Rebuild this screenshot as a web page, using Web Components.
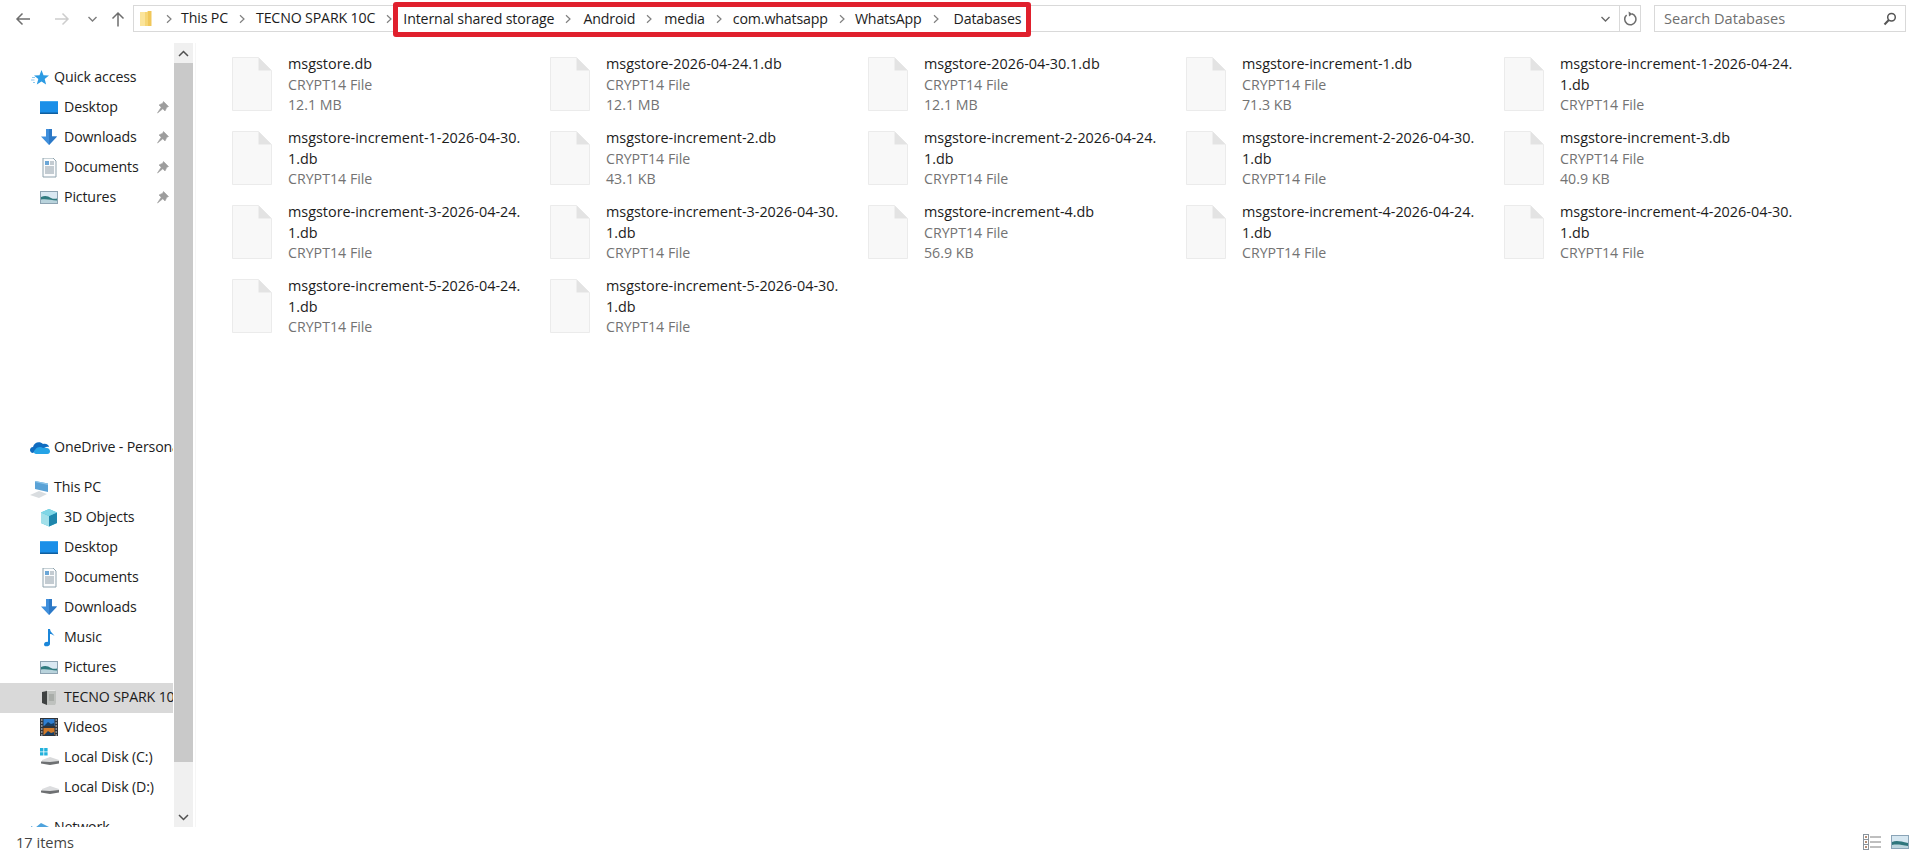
<!DOCTYPE html>
<html lang="en"><head><meta charset="utf-8"><title>Databases</title>
<style>
html,body{margin:0;padding:0;background:#fff;height:100%;overflow:hidden}
body{font:14.6px/20px "Open Sans","Noto Sans","Liberation Sans",sans-serif;color:#1c1c1c}
</style></head><body>
<x-explorer>
  <x-toolbar slot="top">
    <x-crumb>This PC</x-crumb><x-crumb>TECNO SPARK 10C</x-crumb>
    <x-highlight slot="marked">
      <x-crumb style="margin-right:1px">Internal shared storage</x-crumb><x-crumb style="margin-right:1px">Android</x-crumb><x-crumb>media</x-crumb><x-crumb style="margin-right:-1px">com.whatsapp</x-crumb><x-crumb style="margin-right:4px">WhatsApp</x-crumb><x-crumb last>Databases</x-crumb>
    </x-highlight>
  </x-toolbar>
  <x-sidebar slot="side">
    <x-nav level="0" icon="star">Quick access</x-nav>
    <x-nav icon="desktop" pin>Desktop</x-nav>
    <x-nav icon="downloads" pin>Downloads</x-nav>
    <x-nav icon="documents" pin>Documents</x-nav>
    <x-nav icon="pictures" pin>Pictures</x-nav>
    <x-nav level="0" icon="onedrive" style="margin-top:220px">OneDrive - Personal</x-nav>
    <x-nav level="0" icon="pc" style="margin-top:10px">This PC</x-nav>
    <x-nav icon="cube">3D Objects</x-nav>
    <x-nav icon="desktop">Desktop</x-nav>
    <x-nav icon="documents">Documents</x-nav>
    <x-nav icon="downloads">Downloads</x-nav>
    <x-nav icon="music">Music</x-nav>
    <x-nav icon="pictures">Pictures</x-nav>
    <x-nav icon="phone" selected>TECNO SPARK 10C</x-nav>
    <x-nav icon="videos">Videos</x-nav>
    <x-nav icon="diskc">Local Disk (C:)</x-nav>
    <x-nav icon="disk">Local Disk (D:)</x-nav>
    <x-nav level="0" icon="network" style="margin-top:10px">Network</x-nav>
  </x-sidebar>
  <x-files slot="main">
    <x-file type="CRYPT14 File" size="12.1 MB">msgstore.db</x-file>
    <x-file type="CRYPT14 File" size="12.1 MB">msgstore-2026-04-24.1.db</x-file>
    <x-file type="CRYPT14 File" size="12.1 MB">msgstore-2026-04-30.1.db</x-file>
    <x-file type="CRYPT14 File" size="71.3 KB">msgstore-increment-1.db</x-file>
    <x-file type="CRYPT14 File">msgstore-increment-1-2026-04-24.<br>1.db</x-file>
    <x-file type="CRYPT14 File">msgstore-increment-1-2026-04-30.<br>1.db</x-file>
    <x-file type="CRYPT14 File" size="43.1 KB">msgstore-increment-2.db</x-file>
    <x-file type="CRYPT14 File">msgstore-increment-2-2026-04-24.<br>1.db</x-file>
    <x-file type="CRYPT14 File">msgstore-increment-2-2026-04-30.<br>1.db</x-file>
    <x-file type="CRYPT14 File" size="40.9 KB">msgstore-increment-3.db</x-file>
    <x-file type="CRYPT14 File">msgstore-increment-3-2026-04-24.<br>1.db</x-file>
    <x-file type="CRYPT14 File">msgstore-increment-3-2026-04-30.<br>1.db</x-file>
    <x-file type="CRYPT14 File" size="56.9 KB">msgstore-increment-4.db</x-file>
    <x-file type="CRYPT14 File">msgstore-increment-4-2026-04-24.<br>1.db</x-file>
    <x-file type="CRYPT14 File">msgstore-increment-4-2026-04-30.<br>1.db</x-file>
    <x-file type="CRYPT14 File">msgstore-increment-5-2026-04-24.<br>1.db</x-file>
    <x-file type="CRYPT14 File">msgstore-increment-5-2026-04-30.<br>1.db</x-file>
  </x-files>
  <x-status slot="bottom">17 items</x-status>
</x-explorer>
<script>
class Base extends HTMLElement{
  constructor(){super();this.attachShadow({mode:'open'});}
  render(html){this.shadowRoot.innerHTML=html;}
}
customElements.define('x-explorer',class extends Base{connectedCallback(){this.render(`<style>
:host{display:flex;flex-direction:column;width:1919px;height:853px;overflow:hidden;background:#fff}
.mid{flex:1;display:flex;min-height:0}
::slotted([slot=main]){flex:1}
</style><slot name="top"></slot><div class="mid"><slot name="side"></slot><slot name="main"></slot></div><slot name="bottom"></slot>`);}});

const chev=`<svg width="8" height="10" viewBox="0 0 8 10"><path d="M2 1.200 6 5 2 8.800" fill="none" stroke="#808080" stroke-width="1.200"/></svg>`;

customElements.define('x-toolbar',class extends Base{connectedCallback(){this.render(`<style>
:host{display:flex;align-items:flex-start;height:43px;box-sizing:border-box;padding:5px 13px 0 15px;flex:none}
.nav{display:flex;align-items:center;height:27px;width:118px;flex:none}
.nav svg{display:block;flex:none}
.addr{flex:none;width:1508px;height:27px;box-sizing:border-box;border:1px solid #d9d9d9;display:flex;align-items:center}
.folder{margin-left:6px;flex:none;display:block}
.sep{flex:none;display:flex;width:8px;margin:0 8px 0 13px}
.end{margin-left:auto;display:flex;align-items:center;height:100%;flex:none}
.dd{width:28px;display:flex;justify-content:center}
.rf{width:20px;height:100%;border-left:1px solid #d9d9d9;display:flex;align-items:center;justify-content:center}
.search{flex:none;width:252px;margin-left:13px;height:27px;box-sizing:border-box;border:1px solid #d9d9d9;display:flex;align-items:center;padding:0 8px 0 9px;color:#6f6f6f;justify-content:space-between}
.search span{padding-bottom:1px}
.crumbs{display:flex;align-items:center;flex:none}
</style>
<div class="nav">
<svg width="16" height="14" viewBox="0 0 16 14"><path d="M15 7H2M7.500 1.500 2 7l5.500 5.500" fill="none" stroke="#6e6e6e" stroke-width="1.500"/></svg>
<svg style="margin-left:23px" width="16" height="14" viewBox="0 0 16 14"><path d="M1 7h13M8.500 1.500 14 7l-5.500 5.500" fill="none" stroke="#cdcdcd" stroke-width="1.500"/></svg>
<svg style="margin-left:17px" width="11" height="8" viewBox="0 0 11 8"><path d="M1.500 2 5.500 6l4-4" fill="none" stroke="#7d7d7d" stroke-width="1.400"/></svg>
<svg style="margin-left:13px" width="14" height="16" viewBox="0 0 14 16"><path d="M7 15.500V2M1.500 7.500 7 2l5.500 5.500" fill="none" stroke="#6e6e6e" stroke-width="1.500"/></svg>
</div>
<div class="addr">
<svg class="folder" width="12" height="16" viewBox="0 0 12 16"><path d="M0 1h7l1-1h3v15H0z" fill="#f6d676"/><path d="M0 1h5v14H0z" fill="#fbe49a"/><path d="M8 0h3.500v15H8z" fill="#f0c75a"/></svg>
<span class="sep">${chev}</span>
<div class="crumbs"><slot></slot></div>
<slot name="marked"></slot>
<div class="end"><span class="dd"><svg width="11" height="8" viewBox="0 0 11 8"><path d="M1.500 2 5.500 6l4-4" fill="none" stroke="#666" stroke-width="1.300"/></svg></span>
<span class="rf"><svg width="14" height="15" viewBox="0 0 14 15"><path d="M8.800 2.800A5.600 5.600 0 1 1 3.600 4" fill="none" stroke="#6e6e6e" stroke-width="1.500"/><path d="M5.600.6 9.400 2.900 6 5.500z" fill="#6e6e6e"/></svg></span></div>
</div>
<div class="search"><span>Search Databases</span>
<svg width="14" height="14" viewBox="0 0 14 14"><circle cx="8.500" cy="5.200" r="3.800" fill="none" stroke="#555" stroke-width="1.500"/><path d="M5.800 8 1.500 12.500" stroke="#555" stroke-width="2"/></svg></div>`);}});

customElements.define('x-crumb',class extends Base{connectedCallback(){
  const last=this.hasAttribute('last');
  this.render(`<style>
:host{display:inline-flex;align-items:center;flex:none;white-space:nowrap;font-size:14.2px;letter-spacing:-.15px}
svg{display:block;margin:0 10px;flex:none}
span{padding-bottom:1px}
</style><span><slot></slot></span>${last?'':chev}`);}});

customElements.define('x-highlight',class extends Base{connectedCallback(){this.render(`<style>
:host{display:flex;align-items:center;flex:none;box-sizing:border-box;height:35px;margin:1px 0 0 -10px;padding:0 5px;border:5px solid #e0202d;border-radius:3px;background:#fff;position:relative}
</style><slot></slot>`);}});

const ICONS={
star:`<path d="M11.500 2l2 5.200 5.500.3-4.300 3.500 1.400 5.400-4.600-3-4.700 3 1.500-5.400-4.300-3.500 5.500-.3z" fill="#2c9be3"/><path d="M2 9.500h3M1 12h3.500M3 14.500h2" stroke="#8cc8ef" stroke-width="1"/>`,
desktop:`<rect x="0" y="3" width="18" height="13" fill="#1a8fe8"/><rect x="0" y="14.500" width="18" height="1.500" fill="#0f5f9f"/><rect x="0" y="3" width="18" height="1" fill="#42a8ef"/>`,
downloads:`<path d="M6 1h6v7.500h5l-8 8.500-8-8.500h5z" fill="#3f8fdc"/><path d="M9 1h3v7.500h5l-8 8.500z" fill="#2c78c6"/>`,
documents:`<path d="M3 0h10l3 3v16H3z" fill="#fbfcfd" stroke="#8fa3ae" stroke-width="1"/><rect x="5" y="3" width="4" height="4" fill="#6aa6d6"/><path d="M5 9h9M5 11h9M5 13h9M5 15h9M10 4h4M10 6h4" stroke="#8b9aa5" stroke-width="1"/>`,
pictures:`<rect x=".5" y="3.500" width="17" height="12" fill="#d9e8f2" stroke="#8da3b2"/><path d="M1 9c4-2 7-1 10 1 2 1 4 1 6 .5V15H1z" fill="#2f7a7f"/><path d="M1 11.500c5-1 10 .5 16 1V15H1z" fill="#b9d3dc"/>`,
onedrive:`<path d="M3 15c-4 0-4-6 0-6 1-5 7-6 10-3 3-1 6 1 6 3-3-1-5 1-6 3H7z" fill="#0f6cc0"/><path d="M6 16c-2 0-3-3-1-4 1-3 6-4 8-2 3-1 7 0 7 3s-2 3-4 3z" fill="#25a3e6"/>`,
pc:`<path d="M5 3l13 2.500V14l-13-3z" fill="#5aa2d6"/><path d="M5 3l13 2.500v1.500l-13-3z" fill="#8cc4e8"/><path d="M0 17l9-4 8 3-8 4z" fill="#d9dde0"/>`,
cube:`<path d="M9 1l8 3.500v10.500l-8 3.500-8-3.500V4.500z" fill="#45c1d8"/><path d="M9 8v10.500l-8-3.500V4.500z" fill="#a2e0ea"/><path d="M9 8l8-3.500v10.500l-8 3.500z" fill="#1f86ac"/><path d="M9 1l8 3.500-8 3.500-8-3.500z" fill="#7fd6e6"/>`,
music:`<path d="M8 1h2c.5 4 3.500 4.500 4.500 7-2-1.500-3-2-4.500-2v10c0 2.500-6 3.500-6 .5 0-2.500 3-3 4-2.500z" fill="#1b86d9"/>`,
phone:`<path d="M5 3l3-1h7l1 1v12l-1 2H7l-2-1z" fill="#bfc2bf"/><path d="M2 4l5-1v14l-5-2z" fill="#3f4242"/><path d="M7 2h8l1 1H7z" fill="#e6e7e6"/><rect x="9" y="6" width="5" height="7" fill="#a9ada9"/>`,
videos:`<rect x="0" y="0" width="18" height="18" fill="#30343a"/><rect x="3.500" y="1" width="11" height="7" fill="#2f7fd1"/><rect x="3.500" y="10" width="11" height="7" fill="#d07a2a"/><path d="M4 8l4-4 3 2 3-1v3zM4 17l4-4 3 2 3-1v3z" fill="#173f66"/><path d="M1 2h1.500M1 5h1.500M1 8h1.500M1 11h1.500M1 14h1.500M1 17h1.500M15.500 2H17M15.500 5H17M15.500 8H17M15.500 11H17M15.500 14H17M15.500 17H17" stroke="#e8e8e8" stroke-width="1.200"/>`,
diskc:`<path d="M0 0h3.400v3.400H0zM4.200 0h3.400v3.400H4.200zM0 4.200h3.400v3.400H0zM4.200 4.200h3.400v3.400H4.200z" fill="#23b2dc"/><path d="M2 12l8-3 9 3v3H2z" fill="#d9dadb"/><path d="M1 13.500l9 .5 9-1v2.500l-9 1.500-9-1.500z" fill="#6e7072"/>`,
disk:`<path d="M2 11l8-3 9 3v2H2z" fill="#dcdddf"/><path d="M1 12.500l9 .5 9-1v2.500l-9 1.500-9-1.500z" fill="#6e7072"/>`,
network:`<path d="M1 12V8l4 2 6-5 8 4v3l-1 2H2z" fill="#4ea3dd"/><path d="M1 14h18v4H1z" fill="#7cbbe6"/>`
};
customElements.define('x-nav',class extends Base{connectedCallback(){
  const lvl0=this.getAttribute('level')==='0';
  const sel=this.hasAttribute('selected');
  const pin=this.hasAttribute('pin');
  this.render(`<style>
:host{display:flex;align-items:center;height:30px;box-sizing:border-box;padding-left:${lvl0?30:40}px;flex:none;position:relative;background:${sel?'#d9d9d9':'transparent'};white-space:nowrap;overflow:hidden;width:173px;font-size:14.2px;letter-spacing:-.15px}
.i{width:20px;height:20px;flex:none;display:block;margin-right:4px}
.pin{position:absolute;left:156px;top:8px;width:13px;height:13px}
span{padding-bottom:1px}
</style><svg class="i" viewBox="0 0 20 20">${ICONS[this.getAttribute('icon')]||''}</svg><span><slot></slot></span>
${pin?`<svg class="pin" viewBox="0 0 13 13"><path d="M7.500.5 12.500 5.500 10.800 6.300 9 10 6.800 7.800 1.500 12 5.200 6.200 3 4l3.700-1.800z" fill="#9d9d9d" stroke="#9d9d9d" stroke-width=".6"/></svg>`:''}`);}});

customElements.define('x-sidebar',class extends Base{connectedCallback(){this.render(`<style>
:host{display:flex;width:196px;flex:none;height:784px;border-right:1px solid #f6f6f6;box-sizing:border-box}
.list{width:174px;flex:none;overflow:hidden;padding-top:19.5px;box-sizing:border-box;height:784px}
.bar{width:19px;flex:none;display:flex;flex-direction:column;background:#f0f0f0;height:784px}
.btn{height:20px;display:flex;align-items:center;justify-content:center;flex:none}
.thumb{height:699px;background:#c9c9c9;flex:none}
.track{flex:1}
</style><div class="list"><slot></slot></div>
<div class="bar"><div class="btn"><svg width="11" height="7" viewBox="0 0 11 7"><path d="M1 6l4.500-4.500L10 6" fill="none" stroke="#505050" stroke-width="1.500"/></svg></div>
<div class="thumb"></div><div class="track"></div>
<div class="btn"><svg width="11" height="7" viewBox="0 0 11 7"><path d="M1 1l4.500 4.500L10 1" fill="none" stroke="#505050" stroke-width="1.500"/></svg></div></div>`);}});

customElements.define('x-files',class extends Base{connectedCallback(){this.render(`<style>
:host{display:grid;grid-template-columns:repeat(5,318px);grid-auto-rows:74px;align-content:start;padding:11px 0 0 36px;box-sizing:border-box;min-width:0}
</style><slot></slot>`);}});

customElements.define('x-file',class extends Base{connectedCallback(){
  const type=this.getAttribute('type')||'',size=this.getAttribute('size');
  this.render(`<style>
:host{display:flex;align-items:flex-start;min-width:0;font-size:14.4px}
svg{display:block;flex:none;width:40px;height:54px;margin:3px 16px 0 0}
.t{line-height:20.7px;white-space:nowrap;color:#1c1c1c}
.s{color:#737373;font-size:14.2px}
</style><svg viewBox="0 0 40 54"><path d="M.5.500h26L39.500 13.500v40H.5z" fill="#f8f8f8" stroke="#ebebeb"/><path d="M26.500.500v13h13z" fill="#e3e3e3"/></svg>
<div class="t"><slot></slot><div class="s">${type}</div>${size?`<div class="s">${size}</div>`:''}</div>`);}});

customElements.define('x-status',class extends Base{connectedCallback(){this.render(`<style>
:host{display:flex;align-items:center;justify-content:space-between;height:26px;box-sizing:border-box;padding:4px 10px 0 16px;color:#444;flex:none}
.v{display:flex;align-items:center;gap:10px}
svg{display:block}
</style><slot></slot><div class="v">
<svg width="18" height="17" viewBox="0 0 18 17"><g fill="#fff" stroke="#8a949c"><rect x=".5" y=".5" width="5" height="5"/><rect x=".5" y="5.500" width="5" height="5"/><rect x=".5" y="10.500" width="5" height="5"/></g><path d="M2 3h2M2 8h2M2 13h2" stroke="#9c6a4a" stroke-width="1.500"/><path d="M7 3h11M7 8h11M7 13h11" stroke="#7f7f7f"/></svg>
<svg width="18" height="14" viewBox="0 0 18 14"><rect x=".5" y=".5" width="17" height="13" fill="#d6e7f1" stroke="#8aa4b7"/><path d="M1 7c4-2 8-1 16 1v5H1z" fill="#2f767c"/><path d="M1 10c5-1 10 0 16 1v2H1z" fill="#bcd5de"/></svg>
</div>`);}});
</script>
</body></html>
